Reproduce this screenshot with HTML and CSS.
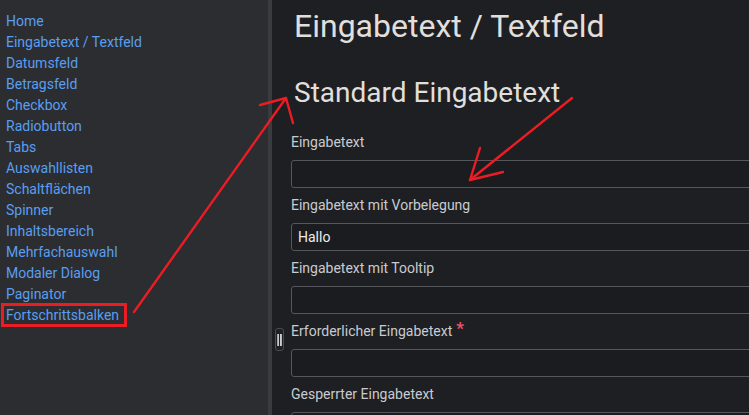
FILE: index.html
```html
<!DOCTYPE html>
<html lang="de">
<head>
<meta charset="utf-8">
<title>Eingabetext / Textfeld</title>
<link rel="stylesheet" href="styles.css">
</head>
<body>
<div class="app">
  <nav class="sidebar">
    <ul class="nav-list">
      <li><a href="#">Home</a></li>
      <li><a href="#">Eingabetext / Textfeld</a></li>
      <li><a href="#">Datumsfeld</a></li>
      <li><a href="#">Betragsfeld</a></li>
      <li><a href="#">Checkbox</a></li>
      <li><a href="#">Radiobutton</a></li>
      <li><a href="#">Tabs</a></li>
      <li><a href="#">Auswahllisten</a></li>
      <li><a href="#">Schaltflächen</a></li>
      <li><a href="#">Spinner</a></li>
      <li><a href="#">Inhaltsbereich</a></li>
      <li><a href="#">Mehrfachauswahl</a></li>
      <li><a href="#">Modaler Dialog</a></li>
      <li><a href="#">Paginator</a></li>
      <li><a href="#" class="marked">Fortschrittsbalken</a></li>
    </ul>
  </nav>
  <div class="splitter"><span class="grip"><i class="bar bar-a"></i><i class="bar bar-b"></i></span></div>
  <main class="content">
    <h1 class="page-title">Eingabetext / Textfeld</h1>
    <h2 class="section-title">Standard Eingabetext</h2>
    <form class="form">
      <div class="field">
        <label class="field-label">Eingabetext</label>
        <input class="input" type="text">
      </div>
      <div class="field">
        <label class="field-label">Eingabetext mit Vorbelegung</label>
        <input class="input" type="text" value="Hallo">
      </div>
      <div class="field">
        <label class="field-label">Eingabetext mit Tooltip</label>
        <input class="input" type="text">
      </div>
      <div class="field">
        <label class="field-label">Erforderlicher Eingabetext<span class="req">*</span></label>
        <input class="input" type="text">
      </div>
      <div class="field">
        <label class="field-label">Gesperrter Eingabetext</label>
        <input class="input" type="text" disabled>
      </div>
    </form>
  </main>
</div>
<svg class="annotations" width="749" height="415" viewBox="0 0 749 415" xmlns="http://www.w3.org/2000/svg">
  <g fill="none" stroke="#ed1c24" stroke-width="2.4" stroke-linecap="round" stroke-linejoin="round">
    <path d="M134 312 L286 98"/>
    <path d="M260 105 L286 98 L293 123"/>
    <path d="M572 98 L470 180"/>
    <path d="M480 148 L470 180 L503 172"/>
  </g>
</svg>
</body>
</html>
```
FILE: styles.css
```css
html, body {
  margin: 0;
  height: 100%;
  overflow: hidden;
}

body {
  font-family: Roboto, "Liberation Sans", Arial, sans-serif;
  background: #1e1f22;
  position: relative;
}

.app {
  display: flex;
  height: 415px;
}

.sidebar {
  width: 268px;
  flex: none;
  background: #2b2d30;
  padding-top: 11px;
  box-sizing: border-box;
}

.nav-list {
  list-style: none;
  margin: 0;
  padding: 0 0 0 6px;
}

.nav-list li {
  height: 21px;
  line-height: 21px;
  font-size: 14px;
}

.nav-list a {
  color: #5a9ef0;
  text-decoration: none;
}

.nav-list a.marked {
  display: inline-block;
  vertical-align: top;
  line-height: 18px;
  margin: 1px 0 0 -2px;
  padding: 0 5px 0 2px;
  outline: 3px solid #ec1c24;
}

.splitter {
  width: 4px;
  flex: none;
  background: #3a3b3e;
  position: relative;
}

.grip {
  position: absolute;
  left: 7px;
  top: 328px;
  width: 9px;
  height: 23px;
  box-sizing: border-box;
  border: 1px solid #4a4c50;
  border-radius: 3px;
  background: #1f2023;
  display: flex;
  align-items: center;
  justify-content: center;
  gap: 1px;
  z-index: 2;
}

.bar {
  display: block;
  width: 2px;
  height: 12px;
}

.bar-a {
  background: linear-gradient(to right, #4d9be0, #e9dcc8);
}

.bar-b {
  background: linear-gradient(to right, #c8dbee, #e2a066);
}

.content {
  flex: 1;
  min-width: 0;
  overflow: hidden;
  padding: 7px 0 0 19px;
  color: #e0dfdc;
}

.page-title {
  font-size: 32px;
  line-height: 38px;
  font-weight: 400;
  margin: 0 0 0 3px;
}

.section-title {
  font-size: 28px;
  line-height: 33px;
  font-weight: 400;
  margin: 31px 0 0 3px;
}

.form {
  margin: 24px 0 0 0;
  width: 520px;
  display: flex;
  flex-direction: column;
}

.field-label {
  display: block;
  font-size: 14px;
  line-height: 18px;
  color: #c8cbd0;
  margin-bottom: 9px;
}

.req {
  color: #f0506e;
  font-size: 17px;
  line-height: 12px;
  margin-left: 4px;
  vertical-align: top;
  font-weight: 700;
}

.input {
  display: block;
  box-sizing: border-box;
  width: 100%;
  height: 28px;
  margin: 0 0 8px 0;
  padding: 0 6px;
  border: 1px solid #55575b;
  border-radius: 3px;
  background: #1b1c1f;
  color: #ececec;
  font-family: Roboto, "Liberation Sans", Arial, sans-serif;
  font-size: 14px;
  outline: none;
}

.annotations {
  position: absolute;
  left: 0;
  top: 0;
  pointer-events: none;
  z-index: 5;
}
```
